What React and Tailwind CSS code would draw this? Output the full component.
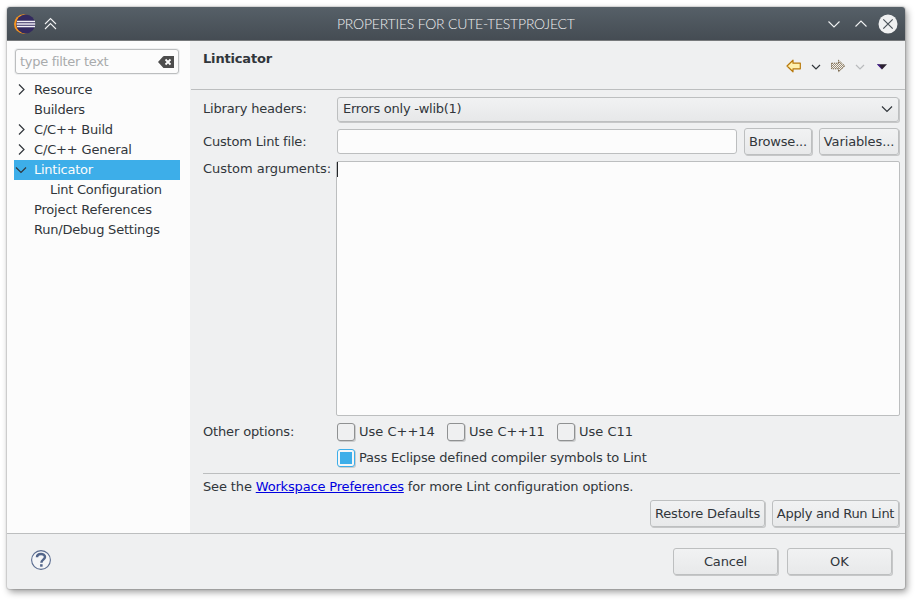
import React from "react";

const buttonBase =
  "flex items-center justify-center rounded-[3px] border border-[#bdbfc0] bg-gradient-to-b from-[#f1f2f3] to-[#e8e9ea] shadow-[1px_1px_0_#c6c7c8] whitespace-nowrap";

function Button({ className, children }) {
  return <button className={`${buttonBase} ${className}`}>{children}</button>;
}

function Chevron({ d, w, h, className = "", stroke = "#31363b", sw = 1.2 }) {
  return (
    <svg width={w} height={h} viewBox={`0 0 ${w} ${h}`} className={`shrink-0 ${className}`}>
      <path d={d} fill="none" stroke={stroke} strokeWidth={sw} />
    </svg>
  );
}

function TreeItem({ label, state, child, spacing = "tracking-[-0.15px]" }) {
  const selected = state === "open";
  return (
    <div className={`flex h-5 items-center ${selected ? "bg-[#3daee9] text-[#fcfcfc]" : ""}`}>
      <span className="flex w-5 shrink-0">
        {state === "closed" && <Chevron w={14} h={14} d="M5 1.5 L10 6.5 L5 11.5" />}
        {state === "open" && <Chevron w={14} h={14} d="M2 4.5 L7 9.5 L12 4.5" />}
      </span>
      <span className={`whitespace-nowrap ${child ? "ml-4" : ""} ${spacing}`}>{label}</span>
    </div>
  );
}

function Check({ checked, label, className = "" }) {
  return (
    <label className={`flex items-center ${className}`}>
      <span
        className={`flex h-[18px] w-[18px] shrink-0 items-center justify-center rounded-[3px] border shadow-[1px_1px_0_#cccdce] ${
          checked ? "border-[#3daee9] bg-[#f5f6f7]" : "border-[#8f9192] bg-[#eff0f1]"
        }`}
      >
        {checked && <span className="h-3 w-3 bg-[#3daee9]" />}
      </span>
      <span className="ml-1 whitespace-nowrap">{label}</span>
    </label>
  );
}

function EclipseLogo() {
  return (
    <svg width="22" height="20" viewBox="0 0 22 20">
      <circle cx="9.7" cy="10" r="9.7" fill="#f7941e" />
      <circle cx="11.6" cy="10" r="9.5" fill="#332a5f" />
      <path d="M3 7.5h18M2.6 10h18.6M3 12.5h18" stroke="#f3f1f7" strokeWidth="1.3" />
    </svg>
  );
}

function TitleBar() {
  return (
    <header className="flex h-[34px] shrink-0 items-center border-b border-[#777a7c] bg-gradient-to-b from-[#566068] to-[#454c53] pl-[7px] pr-[7px]">
      <EclipseLogo />
      <svg width="14" height="14" viewBox="0 0 14 14" className="ml-2">
        <path d="M1 7 L6.5 1.5 L12 7 M1 12 L6.5 6.5 L12 12" fill="none" stroke="#eff0f1" strokeWidth="1.1" />
      </svg>
      <h1 className="ml-[279px] w-[238px] whitespace-nowrap font-['Lato','Liberation_Sans',sans-serif] text-[14px] font-light leading-[20px] tracking-[-0.22px] text-[#eff0f1]">
        PROPERTIES FOR CUTE-TESTPROJECT
      </h1>
      <div className="ml-auto flex items-center">
        <Chevron w={14} h={14} d="M1.5 4.5 L7 10 L12.5 4.5" stroke="#eff0f1" sw={1.1} />
        <Chevron w={14} h={14} d="M1.5 9.5 L7 4 L12.5 9.5" stroke="#eff0f1" sw={1.1} className="ml-[13px]" />
        <svg width="20" height="20" viewBox="0 0 20 20" className="ml-[10px]">
          <circle cx="10" cy="10" r="9.5" fill="#eff0f1" />
          <path d="M5.3 5.3 L14.7 14.7 M14.7 5.3 L5.3 14.7" stroke="#4b535a" strokeWidth="1.2" />
        </svg>
      </div>
    </header>
  );
}

function Sidebar() {
  return (
    <aside className="flex w-[183px] shrink-0 flex-col bg-[#fcfcfc] pl-[7px] pr-[10px] pt-2">
      <div className="ml-px flex h-[25px] w-[164px] items-center rounded-[3px] border border-[#bcbebf] bg-[#fcfcfc] pl-1 pr-1 shadow-[0_0_0_1px_#eff0f1]">
        <span className="whitespace-nowrap tracking-[-0.3px] text-[#a9abac]">type filter text</span>
        <svg width="16" height="12" viewBox="0 0 16 12" className="ml-auto">
          <path d="M0 6 L5 0.5 Q5.4 0 6 0 H16 V12 H6 Q5.4 12 5 11.5 Z" fill="#4d4d4d" />
          <path d="M7.5 3.5 L12.5 8.5 M12.5 3.5 L7.5 8.5" stroke="#fcfcfc" strokeWidth="1.8" />
        </svg>
      </div>
      <nav className="mt-[6px] flex flex-col">
        <TreeItem label="Resource" state="closed" />
        <TreeItem label="Builders" spacing="tracking-[-0.25px]" />
        <TreeItem label="C/C++ Build" state="closed" spacing="tracking-[-0.2px]" />
        <TreeItem label="C/C++ General" state="closed" />
        <TreeItem label="Linticator" state="open" spacing="tracking-[-0.25px]" />
        <TreeItem label="Lint Configuration" child spacing="tracking-[-0.27px]" />
        <TreeItem label="Project References" spacing="tracking-[-0.17px]" />
        <TreeItem label="Run/Debug Settings" spacing="tracking-[-0.21px]" />
      </nav>
    </aside>
  );
}

function HeaderTools() {
  return (
    <div className="mt-[17px] flex h-4 items-center">
      <svg width="16" height="14" viewBox="0 0 16 14">
        <path d="M1 7 L7 1.2 V4.2 H14.3 V9.8 H7 V12.8 Z" fill="#fff0ad" stroke="#b8780b" strokeWidth="1.2" strokeLinejoin="round" />
      </svg>
      <Chevron w={10} h={8} d="M1 2 L5 6 L9 2" className="ml-[9px] mt-[2px]" />
      <svg width="16" height="14" viewBox="0 0 16 14" className="ml-[9px]">
        <defs>
          <pattern id="dots" width="2" height="2" patternUnits="userSpaceOnUse">
            <rect width="2" height="2" fill="#f4f2ee" />
            <rect width="1" height="1" fill="#9a8c76" />
            <rect x="1" y="1" width="1" height="1" fill="#9a8c76" />
          </pattern>
        </defs>
        <path d="M1.5 4.2 H8.5 V1.2 L14.8 7 L8.5 12.8 V9.8 H1.5 Z" fill="url(#dots)" stroke="#7d6c50" strokeWidth="1" strokeDasharray="1.5 0.8" />
      </svg>
      <Chevron w={10} h={8} d="M1 2 L5 6 L9 2" stroke="#b9bbbd" className="ml-[9px] mt-[2px]" />
      <svg width="10" height="6" viewBox="0 0 10 6" className="ml-3 mt-px">
        <path d="M0 0.3 H10 L5 5.5 Z" fill="#2a2030" />
        <path d="M0 0.3 H2 L5 5.5 Z" fill="#4b1fa0" />
      </svg>
    </div>
  );
}

function Content() {
  return (
    <main className="flex min-w-0 flex-1 flex-col">
      <div className="ml-px flex h-[49px] shrink-0 justify-between border-b border-[#bcbebf] pl-3 pr-[18px]">
        <h2 className="mt-2 font-bold leading-5 tracking-[-0.17px] whitespace-nowrap">Linticator</h2>
        <HeaderTools />
      </div>
      <div className="flex flex-col pl-[13px] pr-[5px]">
        <div className="mt-[6px] flex h-[26px] items-center">
          <span className="w-[134px] shrink-0 whitespace-nowrap tracking-[-0.18px]">Library headers:</span>
          <div className="flex h-[25px] w-[562px] items-center justify-between rounded-[3px] border border-[#bdbfc0] bg-gradient-to-b from-[#f1f2f3] to-[#e7e8e9] pl-[5px] pr-1 shadow-[1px_1px_0_#c6c7c8]">
            <span className="whitespace-nowrap tracking-[-0.25px]">Errors only -wlib(1)</span>
            <Chevron w={14} h={10} d="M2 2.5 L7 7.5 L12 2.5" />
          </div>
        </div>
        <div className="mt-[6px] flex h-[27px] items-center">
          <span className="w-[134px] shrink-0 whitespace-nowrap tracking-[-0.18px]">Custom Lint file:</span>
          <div className="h-[25px] w-[400px] rounded-[3px] border border-[#bcbebf] bg-[#fcfcfc]" />
          <Button className="ml-[7px] h-[27px] w-[68px] tracking-[-0.2px]">Browse...</Button>
          <Button className="ml-[7px] h-[27px] w-[80px] tracking-[-0.12px]">Variables...</Button>
        </div>
        <div className="mt-[6px] flex h-[255px]">
          <span className="w-[133px] shrink-0 whitespace-nowrap leading-[15px] tracking-[-0.03px]">Custom arguments:</span>
          <div className="w-[564px] rounded-[2px] border border-[#bcbebf] bg-[#fcfcfc]">
            <div className="h-[15px] w-px bg-[#232629]" />
          </div>
        </div>
        <div className="mt-[7px] flex h-[18px] items-center">
          <span className="w-[134px] shrink-0 whitespace-nowrap tracking-[-0.15px]">Other options:</span>
          <Check label="Use C++14" className="w-[110px]" />
          <Check label="Use C++11" className="w-[110px]" />
          <Check label="Use C11" />
        </div>
        <Check
          checked
          label="Pass Eclipse defined compiler symbols to Lint"
          className="ml-[134px] mt-2 tracking-[-0.18px]"
        />
        <div className="mt-[6px] h-px w-[697px] bg-[#bcbebf]" />
        <p className="mt-[3px] whitespace-nowrap leading-5 tracking-[-0.14px]">
          See the <a className="tracking-[-0.17px] text-[#0000e0] underline">Workspace Preferences</a> for more Lint configuration options.
        </p>
        <div className="mt-[3px] flex pl-[447px]">
          <Button className="h-[27px] w-[115px] tracking-[-0.17px]">Restore Defaults</Button>
          <Button className="ml-[7px] h-[27px] w-[127px] tracking-[-0.3px]">Apply and Run Lint</Button>
        </div>
      </div>
    </main>
  );
}

export default function App() {
  return (
    <div className="h-[602px] w-[918px] overflow-hidden bg-white pl-[7px] pt-[7px] font-['DejaVu_Sans',sans-serif] text-[13px] leading-4 text-[#31363b]">
      <div className="flex h-[582px] w-[898px] flex-col overflow-hidden rounded-[3px] bg-[#eff0f1] shadow-[2px_3px_7px_rgba(0,0,0,0.4),0_0_1px_1px_rgba(0,0,0,0.12)]">
        <TitleBar />
        <div className="flex h-[492px] shrink-0">
          <Sidebar />
          <Content />
        </div>
        <footer className="flex flex-1 items-start border-t border-[#bcbebf] pl-6 pr-[13px] pt-[14px]">
          <svg width="20" height="20" viewBox="0 0 20 20" className="mt-[2px]">
            <circle cx="10" cy="10" r="9.4" fill="#f4f5f7" stroke="#596b8f" strokeWidth="1.1" />
            <path d="M6 7.3 C6 2.8 14 3 14 7 C14 9.7 10.4 9.6 10.4 12.7" fill="none" stroke="#52658a" strokeWidth="2.5" />
            <rect x="9.1" y="14.2" width="2.5" height="2.5" fill="#52658a" />
          </svg>
          <Button className="ml-auto h-[27px] w-[105px] tracking-[-0.15px]">Cancel</Button>
          <Button className="ml-[9px] h-[27px] w-[105px] border-[#b0b2b3]">OK</Button>
        </footer>
      </div>
    </div>
  );
}
